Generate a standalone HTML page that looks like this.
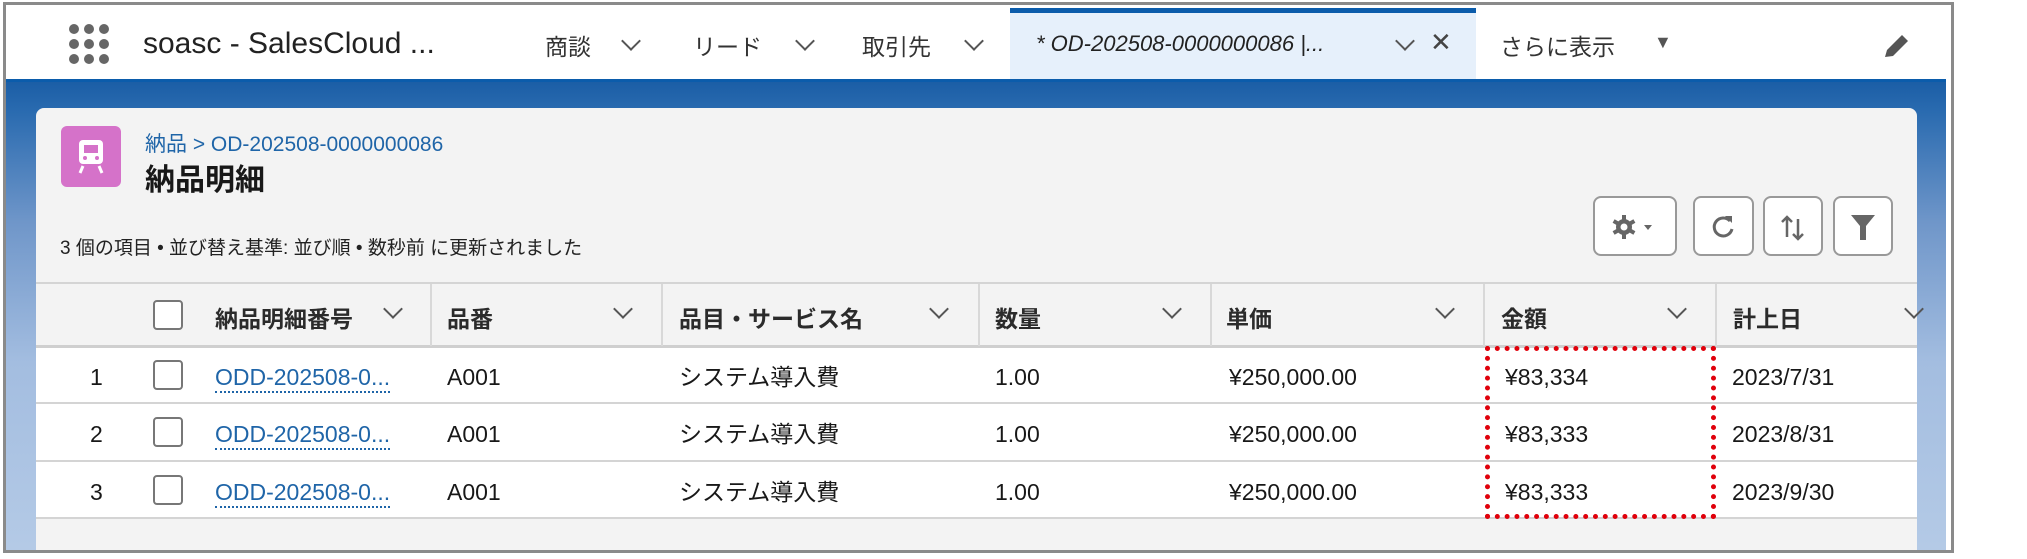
<!DOCTYPE html>
<html><head><meta charset="utf-8"><style>
*{margin:0;padding:0;box-sizing:border-box}
body{width:2027px;height:559px;background:#fff;position:relative;overflow:hidden;font-family:"Liberation Sans","Noto Sans CJK JP",sans-serif;color:#181818}
.a{position:absolute;white-space:nowrap}
.chev{position:absolute;width:14px;height:14px;border-right:2px solid #555;border-bottom:2px solid #555;transform:rotate(45deg)}
.hd{font-size:23px;font-weight:bold;color:#2b2b2b}
.cell{font-size:23px;color:#181818}
.vl{position:absolute;width:2px;background:#d8d8d8;top:284px;height:62px}
.hl{position:absolute;left:36px;width:1881px;height:2px;background:#d4d4d4}
.cb{position:absolute;width:30px;height:30px;border:2px solid #777;border-radius:4px;background:#fff;left:153px}
.btn{position:absolute;top:196px;height:60px;border:2px solid #999;border-radius:8px;background:#fff}
</style></head><body>
<div class="a" style="left:3px;top:2px;width:1951px;height:551px;border:3px solid #8a8a8a;"></div>
<svg class="a" style="left:68px;top:23px" width="44" height="42"><g fill="#666">
<circle cx="6" cy="6" r="5"/><circle cx="21" cy="6" r="5"/><circle cx="36" cy="6" r="5"/>
<circle cx="6" cy="21" r="5"/><circle cx="21" cy="21" r="5"/><circle cx="36" cy="21" r="5"/>
<circle cx="6" cy="36" r="5"/><circle cx="21" cy="36" r="5"/><circle cx="36" cy="36" r="5"/></g></svg>
<div class="a" style="left:143px;top:27px;font-size:30px;color:#222">soasc - SalesCloud ...</div>
<div class="a" style="left:545px;top:28px;font-size:23px;color:#333">商談</div>
<div class="chev" style="left:624px;top:34px"></div>
<div class="a" style="left:693px;top:28px;font-size:23px;color:#333">リード</div>
<div class="chev" style="left:798px;top:34px"></div>
<div class="a" style="left:862px;top:28px;font-size:23px;color:#333">取引先</div>
<div class="chev" style="left:967px;top:34px"></div>
<div class="a" style="left:1010px;top:8px;width:466px;height:72px;background:#e6f0fb"></div>
<div class="a" style="left:1010px;top:8px;width:466px;height:5px;background:#0b5cab"></div>
<div class="a" style="left:1036px;top:31px;font-size:22px;font-style:italic;color:#222">* OD-202508-0000000086 |...</div>
<div class="chev" style="left:1398px;top:34px"></div>
<div class="a" style="left:1430px;top:27px;font-size:26px;color:#444">✕</div>
<div class="a" style="left:1500px;top:28px;font-size:23px;color:#333">さらに表示</div>
<div class="a" style="left:1654px;top:32px;font-size:18px;color:#555">▼</div>
<svg class="a" style="left:1882px;top:32px" width="30" height="28"><path d="M3 25 L5 18 L20 3 L26 9 L11 24 Z" fill="#555"/></svg>
<div class="a" style="left:6px;top:79px;width:1940px;height:3px;background:#0b5cab"></div>
<div class="a" style="left:6px;top:82px;width:1940px;height:468px;background:linear-gradient(#1b5ea6 0,#2a6bb0 30px,#6f96c9 140px,#a3bde0 280px,#b4cae6 468px)"></div>
<div class="a" style="left:36px;top:108px;width:1881px;height:442px;background:#f3f3f3;border-radius:8px 8px 0 0"></div>
<div class="a" style="left:61px;top:126px;width:60px;height:61px;background:#d572c9;border-radius:6px"></div>
<svg class="a" style="left:74px;top:138px" width="34" height="38"><rect x="5" y="2" width="24" height="24" rx="4" fill="#fff"/><rect x="10" y="7" width="14" height="8" fill="#d572c9"/><circle cx="11" cy="20" r="2" fill="#d572c9"/><circle cx="23" cy="20" r="2" fill="#d572c9"/><path d="M9 28 L6 35 M25 28 L28 35" stroke="#fff" stroke-width="3"/></svg>
<div class="a" style="left:145px;top:128px;font-size:21px;color:#1f65a8">納品 &gt; OD-202508-0000000086</div>
<div class="a" style="left:145px;top:155px;font-size:30px;font-weight:bold;color:#181818">納品明細</div>
<div class="a" style="left:60px;top:233px;font-size:19px;color:#222">3 個の項目 • 並び替え基準: 並び順 • 数秒前 に更新されました</div>
<div class="btn" style="left:1593px;width:84px"></div>
<svg class="a" style="left:1611px;top:213px" width="50" height="28"><g fill="#666"><circle cx="13" cy="14" r="8"/><rect x="11" y="2" width="4" height="24"/><rect x="11" y="2" width="4" height="24" transform="rotate(60 13 14)"/><rect x="11" y="2" width="4" height="24" transform="rotate(120 13 14)"/></g><circle cx="13" cy="14" r="3.5" fill="#fff"/><path d="M33 12 L41 12 L37 17 Z" fill="#666"/></svg>
<div class="btn" style="left:1693px;width:61px"></div>
<svg class="a" style="left:1710px;top:213px" width="28" height="28"><path d="M20 8 A9 9 0 1 0 22 16" fill="none" stroke="#666" stroke-width="3"/><path d="M15 3 L22 3 L22 10 Z" fill="#666"/></svg>
<div class="btn" style="left:1763px;width:60px"></div>
<svg class="a" style="left:1778px;top:213px" width="30" height="30"><path d="M9 24 V4 M4 9 L9 4 L14 9 M20 6 V26 M15 21 L20 26 L25 21" fill="none" stroke="#666" stroke-width="2.5"/></svg>
<div class="btn" style="left:1833px;width:60px"></div>
<svg class="a" style="left:1849px;top:211px" width="28" height="32"><path d="M2 4 H26 L17 15 V29 H11 V15 Z" fill="#666"/></svg>
<div class="hl" style="top:282px"></div>
<div class="a" style="left:36px;top:346px;width:1881px;height:172px;background:#fff"></div>
<div class="hl" style="top:345px;height:3px;background:#cfcfcf"></div>
<div class="hl" style="top:402px"></div>
<div class="hl" style="top:460px"></div>
<div class="hl" style="top:517px"></div>
<div class="vl" style="left:430px"></div><div class="vl" style="left:661px"></div><div class="vl" style="left:978px"></div>
<div class="vl" style="left:1210px"></div><div class="vl" style="left:1483px"></div><div class="vl" style="left:1715px"></div>
<div class="cb" style="top:300px"></div>
<div class="a hd" style="left:215px;top:300px">納品明細番号</div><div class="chev" style="left:386px;top:302px"></div>
<div class="a hd" style="left:447px;top:300px">品番</div><div class="chev" style="left:616px;top:302px"></div>
<div class="a hd" style="left:679px;top:300px">品目・サービス名</div><div class="chev" style="left:932px;top:302px"></div>
<div class="a hd" style="left:995px;top:300px">数量</div><div class="chev" style="left:1165px;top:302px"></div>
<div class="a hd" style="left:1226px;top:300px">単価</div><div class="chev" style="left:1438px;top:302px"></div>
<div class="a hd" style="left:1501px;top:300px">金額</div><div class="chev" style="left:1670px;top:302px"></div>
<div class="a hd" style="left:1733px;top:300px">計上日</div><div class="chev" style="left:1907px;top:302px"></div>

<div class="a cell" style="left:90px;top:364px">1</div><div class="cb" style="top:360px"></div>
<div class="a cell" style="left:215px;top:364px;color:#1f65a8;border-bottom:2px dotted #1f65a8">ODD-202508-0...</div>
<div class="a cell" style="left:447px;top:364px">A001</div><div class="a cell" style="left:679px;top:358px">システム導入費</div>
<div class="a cell" style="left:995px;top:364px">1.00</div><div class="a cell" style="left:1229px;top:364px">¥250,000.00</div>
<div class="a cell" style="left:1505px;top:364px">¥83,334</div><div class="a cell" style="left:1732px;top:364px">2023/7/31</div>

<div class="a cell" style="left:90px;top:421px">2</div><div class="cb" style="top:417px"></div>
<div class="a cell" style="left:215px;top:421px;color:#1f65a8;border-bottom:2px dotted #1f65a8">ODD-202508-0...</div>
<div class="a cell" style="left:447px;top:421px">A001</div><div class="a cell" style="left:679px;top:415px">システム導入費</div>
<div class="a cell" style="left:995px;top:421px">1.00</div><div class="a cell" style="left:1229px;top:421px">¥250,000.00</div>
<div class="a cell" style="left:1505px;top:421px">¥83,333</div><div class="a cell" style="left:1732px;top:421px">2023/8/31</div>

<div class="a cell" style="left:90px;top:479px">3</div><div class="cb" style="top:475px"></div>
<div class="a cell" style="left:215px;top:479px;color:#1f65a8;border-bottom:2px dotted #1f65a8">ODD-202508-0...</div>
<div class="a cell" style="left:447px;top:479px">A001</div><div class="a cell" style="left:679px;top:473px">システム導入費</div>
<div class="a cell" style="left:995px;top:479px">1.00</div><div class="a cell" style="left:1229px;top:479px">¥250,000.00</div>
<div class="a cell" style="left:1505px;top:479px">¥83,333</div><div class="a cell" style="left:1732px;top:479px">2023/9/30</div>

<div class="a" style="left:1485px;top:346px;width:231px;height:173px;border:5px dotted #e0000b"></div>
</body></html>
